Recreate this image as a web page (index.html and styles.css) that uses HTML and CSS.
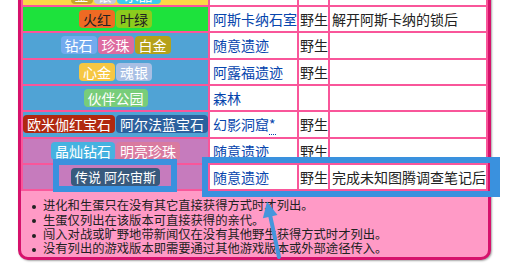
FILE: index.html
```html
<!DOCTYPE html>
<html lang="zh-CN">
<head>
<meta charset="utf-8">
<title>获得方式</title>
<link rel="stylesheet" href="styles.css">
</head>
<body>
<div class="box">
  <table class="acq">
    <colgroup>
      <col class="c-ver"><col class="c-loc"><col class="c-way"><col class="c-note">
    </colgroup>
    <tr class="r-gen2">
      <td class="ver"><div class="tags"><span class="tag t-gold">金</span><span class="tag t-silver">银</span><span class="tag t-crystal">水晶</span></div></td>
      <td class="loc"></td><td class="way"></td><td class="note"></td>
    </tr>
    <tr class="r-gen3">
      <td class="ver"><div class="tags"><span class="tag dark t-fr">火红</span><span class="tag dark t-lg">叶绿</span></div></td>
      <td class="loc">阿斯卡纳石室</td><td class="way">野生</td><td class="note">解开阿斯卡纳的锁后</td>
    </tr>
    <tr class="r-gen4">
      <td class="ver"><div class="tags"><span class="tag t-d">钻石</span><span class="tag t-p">珍珠</span><span class="tag t-pt">白金</span></div></td>
      <td class="loc">随意遗迹</td><td class="way">野生</td><td class="note"></td>
    </tr>
    <tr class="r-gen4">
      <td class="ver"><div class="tags"><span class="tag t-hg">心金</span><span class="tag t-ss">魂银</span></div></td>
      <td class="loc">阿露福遗迹</td><td class="way">野生</td><td class="note"></td>
    </tr>
    <tr class="r-gen4">
      <td class="ver"><div class="tags"><span class="tag t-pw">伙伴公园</span></div></td>
      <td class="loc">森林</td><td class="way"></td><td class="note"></td>
    </tr>
    <tr class="r-gen4">
      <td class="ver"><div class="tags"><span class="tag t-or">欧米伽红宝石</span><span class="tag t-as">阿尔法蓝宝石</span></div></td>
      <td class="loc">幻影洞窟<span class="abbr">*</span></td><td class="way">野生</td><td class="note"></td>
    </tr>
    <tr class="r-gen8">
      <td class="ver"><div class="tags"><span class="tag t-bd">晶灿钻石</span><span class="tag t-sp">明亮珍珠</span></div></td>
      <td class="loc">随意遗迹</td><td class="way">野生</td><td class="note"></td>
    </tr>
    <tr class="r-gen8">
      <td class="ver"><div class="tags"><span class="tag t-la">传说 阿尔宙斯</span></div></td>
      <td class="loc">随意遗迹</td><td class="way">野生</td><td class="note">完成未知图腾调查笔记后</td>
    </tr>
  </table>
  <div class="notes">
    <ul>
      <li>进化和生蛋只在没有其它直接获得方式时才列出。</li>
      <li>生蛋仅列出在该版本可直接获得的亲代。</li>
      <li>闯入对战或旷野地带新闻仅在没有其他野生获得方式时才列出。</li>
      <li>没有列出的游戏版本即需要通过其他游戏版本或外部途径传入。</li>
    </ul>
  </div>
</div>
<div class="mark mark-a"></div>
<div class="mark mark-b"></div>
<svg class="arrow" width="506" height="266" viewBox="0 0 506 266">
  <line x1="279" y1="257" x2="269.6" y2="213" stroke="#4596dc" stroke-width="4" stroke-linecap="round"/>
  <polygon points="267,201.5 277.5,215 262.9,218.3" fill="#4596dc"/>
</svg>
</body>
</html>
```
FILE: styles.css
```css
html, body {
  margin: 0;
  padding: 0;
}
body {
  width: 506px;
  height: 266px;
  overflow: hidden;
  background: #ffffff;
  font-family: "Noto Sans CJK SC", "Noto Sans", sans-serif;
}
.box {
  margin: -25.33px 0 0 18px;
  width: 473px;
  box-sizing: border-box;
  border: 3px solid #d6126c;
  border-radius: 10px;
  background: #ff9ac6;
  box-shadow: 1px 1px 2px rgba(0, 0, 0, 0.35);
  overflow: hidden;
}
.acq {
  width: 467px;
  table-layout: fixed;
  border-collapse: separate;
  border-spacing: 2px;
  background: #f9569a;
  font-size: 14px;
  line-height: 18px;
}
.c-ver { width: 185px; }
.c-loc { width: 87px; }
.c-way { width: 29px; }
.c-note { width: 156px; }
.acq td {
  height: 24.33px;
  padding: 0;
  background: #ffffff;
  vertical-align: middle;
  white-space: nowrap;
  overflow: hidden;
}
.acq td.ver { text-align: center; }
.acq td.loc { padding-left: 3px; color: #0645ad; }
.acq td.way { padding-left: 1px; color: #222222; }
.acq td.note { padding-left: 2px; color: #222222; }
.abbr { border-bottom: 1px dotted #0645ad; }

.r-gen2 td.ver { background: #fcd846; vertical-align: bottom; padding-bottom: 1px; }
.r-gen3 td.ver { background: #1de23c; }
.r-gen4 td.ver { background: #50a3d5; }
.r-gen8 td.ver { background: #c67bbd; }

.tags {
  display: flex;
  justify-content: center;
  gap: 1px;
}
.tag {
  display: block;
  height: 18px;
  line-height: 18px;
  padding: 0 4px;
  border-radius: 4px;
  color: #ffffff;
}
.tag.dark { color: #222222; }
.t-gold { background: #c9a52c; }
.t-silver { background: #c4c8d8; }
.t-crystal { background: #3ccbee; padding: 0 8px; }
.t-fr { background: #ef6a23; }
.t-lg { background: #8ccc1d; }
.t-d { background: #72aaee; }
.t-p { background: #dd6b9f; }
.t-pt { background: #b5a11b; }
.t-hg { background: #f6c743; }
.t-ss { background: #a8bfe4; }
.t-pw { background: #78cd7a; }
.t-or { background: #b1280f; }
.t-as { background: #2c619e; }
.t-bd { background: #45b2e0; }
.t-sp { background: #d97a9f; }
.t-la { background: #385a7d; font-size: 13px; }

.notes {
  padding: 7px 0 1.5px;
}
.notes ul {
  margin: 0;
  padding: 0;
  list-style: none;
  font-size: 12.3px;
  line-height: 14.33px;
  color: #222222;
}
.notes li {
  white-space: nowrap;
}
.notes li::before {
  content: "";
  display: inline-block;
  width: 4px;
  height: 4px;
  border-radius: 50%;
  background: #222222;
  margin: 0 7px 0 11px;
  vertical-align: middle;
}

.mark {
  position: absolute;
  box-sizing: border-box;
  border: 6px solid #3a91de;
}
.mark-a {
  left: 52.5px;
  top: 159px;
  width: 124px;
  height: 33px;
}
.mark-b {
  left: 202px;
  top: 157px;
  width: 298px;
  height: 40px;
  border-right-width: 10px;
}
.arrow {
  position: absolute;
  left: 0;
  top: 0;
  pointer-events: none;
}
```
